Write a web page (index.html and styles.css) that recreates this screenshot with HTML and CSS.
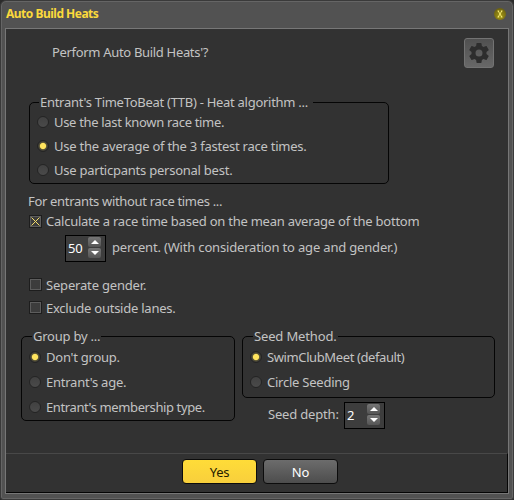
FILE: index.html
```html
<!DOCTYPE html>
<html lang="en">
<head>
<meta charset="utf-8">
<title>Auto Build Heats</title>
<link rel="stylesheet" href="styles.css">
</head>
<body>
<div class="window">
  <header class="titlebar">
    <h1>Auto Build Heats</h1>
    <button class="close" aria-label="Close"><svg width="12" height="12" viewBox="0 0 12 12"><path d="M3.5 3h1.7M6.8 3h1.7M3.5 9h1.7M6.8 9h1.7M4.2 3l3.6 6M7.8 3L4.2 9" fill="none" stroke="#f5ea70" stroke-width="1"/></svg></button>
  </header>
  <main class="panel">
    <div class="content">
      <div class="prompt">
        <span class="tight">Perform Auto Build Heats'?</span>
        <button class="gear" aria-label="Settings"><svg width="20" height="20" viewBox="2 2 20 20"><path fill="#2d2d2d" d="M19.43 12.98c.04-.32.07-.64.07-.98s-.03-.66-.07-.98l2.11-1.65c.19-.15.24-.42.12-.64l-2-3.46c-.12-.22-.39-.3-.61-.22l-2.49 1c-.52-.4-1.08-.73-1.69-.98l-.38-2.65A.49.49 0 0 0 14 2h-4c-.25 0-.46.18-.49.42l-.38 2.65c-.61.25-1.17.59-1.69.98l-2.49-1c-.23-.09-.49 0-.61.22l-2 3.46c-.13.22-.07.49.12.64l2.11 1.65c-.04.32-.07.65-.07.98s.03.66.07.98l-2.11 1.65c-.19.15-.24.42-.12.64l2 3.46c.12.22.39.3.61.22l2.49-1c.52.4 1.08.73 1.69.98l.38 2.65c.03.24.24.42.49.42h4c.25 0 .46-.18.49-.42l.38-2.65c.61-.25 1.17-.59 1.69-.98l2.49 1c.23.09.49 0 .61-.22l2-3.46c.12-.22.07-.49-.12-.64zM12 15.5a3.5 3.5 0 1 1 0-7 3.5 3.5 0 0 1 0 7z"/></svg></button>
      </div>
      <fieldset class="algorithm">
        <legend>Entrant's TimeToBeat (TTB) - Heat algorithm ...</legend>
        <label class="option"><i class="radio"></i><span class="tight">Use the last known race time.</span></label>
        <label class="option"><i class="radio on"></i><span>Use the average of the 3 fastest race times.</span></label>
        <label class="option"><i class="radio"></i><span>Use particpants personal best.</span></label>
      </fieldset>
      <section class="missing">
        <div class="line"><span class="tight">For entrants without race times ...</span></div>
        <label class="line check"><i class="box"><svg width="9" height="9" viewBox="0 0 9 9"><path d="M.5.5l8 8M8.5.5l-8 8" stroke="#f3dc68" stroke-width="1"/></svg></i><span>Calculate a race time based on the mean average of the bottom</span></label>
        <div class="percent">
          <div class="spinner"><b>50</b><div class="arrows"><i><svg width="8" height="4" viewBox="0 0 8 4"><path d="M0 4l4-4 4 4z" fill="#fff"/></svg></i><i><svg width="8" height="4" viewBox="0 0 8 4"><path d="M0 0l4 4 4-4z" fill="#fff"/></svg></i></div></div>
          <span class="loose">percent. (With consideration to age and gender.)</span>
        </div>
      </section>
      <section class="flags">
        <label class="check"><i class="box"></i><span class="loose">Seperate gender.</span></label>
        <label class="check"><i class="box"></i><span>Exclude outside lanes.</span></label>
      </section>
      <div class="columns">
        <fieldset class="group">
          <legend>Group by ...</legend>
          <label class="option"><i class="radio on"></i><span>Don't group.</span></label>
          <label class="option"><i class="radio"></i><span>Entrant's age.</span></label>
          <label class="option"><i class="radio"></i><span class="tighter">Entrant's membership type.</span></label>
        </fieldset>
        <div class="seeding">
          <fieldset class="seed">
            <legend>Seed Method.</legend>
            <label class="option"><i class="radio on"></i><span class="tighter">SwimClubMeet (default)</span></label>
            <label class="option"><i class="radio"></i><span>Circle Seeding</span></label>
          </fieldset>
          <div class="depth">
            <span class="loose">Seed depth:</span>
            <div class="spinner"><b>2</b><div class="arrows"><i><svg width="8" height="4" viewBox="0 0 8 4"><path d="M0 4l4-4 4 4z" fill="#fff"/></svg></i><i><svg width="8" height="4" viewBox="0 0 8 4"><path d="M0 0l4 4 4-4z" fill="#fff"/></svg></i></div></div>
          </div>
        </div>
      </div>
    </div>
    <footer class="actions">
      <button class="btn primary">Yes</button>
      <button class="btn">No</button>
    </footer>
  </main>
</div>
</body>
</html>
```
FILE: styles.css
```css
* { box-sizing: border-box; }
body {
  margin: 0;
  background: #2b2b2b;
  color: #c3c3c3;
  font: 13px/18px "Noto Sans", "Open Sans", sans-serif;
  letter-spacing: -0.24px;
}
button { font: inherit; letter-spacing: inherit; padding: 0; }
i, b { font-style: normal; font-weight: normal; }
svg { display: block; }
span, legend { white-space: nowrap; }
.loose { letter-spacing: -0.18px; }
.tight { letter-spacing: -0.32px; }
.tighter { letter-spacing: -0.39px; }

.window {
  width: 514px;
  height: 500px;
  padding: 0 4px 5px;
  display: flex;
  flex-direction: column;
  background: #525252;
  border: 1px solid #3a3a3a;
  border-radius: 6px 6px 3px 3px;
  box-shadow: inset 0 0 0 1px #656565;
}
.titlebar {
  height: 27px;
  flex: none;
  display: flex;
  align-items: center;
  justify-content: space-between;
  padding: 0 3px 1px 1px;
}
.titlebar h1 {
  margin: 0;
  color: #fbd93c;
  font-size: 12px;
  font-weight: bold;
  letter-spacing: -0.5px;
}
.close {
  width: 12px;
  height: 12px;
  border: 0;
  border-radius: 50%;
  background: radial-gradient(circle at 50% 65%, #a69a18, #6c6210 75%);
}
.panel {
  flex: 1;
  display: flex;
  flex-direction: column;
  background: #323232;
  border: 1px solid #777;
}
.content { height: 424px; padding: 9px 13px 0 15px; }

.prompt { display: flex; justify-content: space-between; padding: 0 1px 0 31px; }
.prompt span { padding-top: 5px; }
.gear {
  width: 30px;
  height: 30px;
  display: grid;
  place-items: center;
  border: 1px solid #737373;
  border-radius: 3px;
  background: linear-gradient(#505050, #686868);
}

fieldset {
  margin: 0;
  min-width: 0;
  border: 1px solid #050505;
  border-radius: 5px;
  padding: 0 7px;
}
legend { height: 18px; padding: 0 1px; }
.option { height: 24px; display: flex; align-items: center; gap: 5px; padding-bottom: 2px; }
.radio {
  width: 12px;
  height: 12px;
  flex: none;
  border: 1px solid #242424;
  border-radius: 50%;
  background: linear-gradient(#414141, #4a4a4a);
}
.radio.on { background: radial-gradient(circle, #ffe45e 0 2.7px, #5a5434 3.6px, #383838 5px); }

.algorithm { width: 360px; height: 91px; margin: 25px 0 0 8px; }
.algorithm legend { margin-left: 2px; padding-right: 5px; letter-spacing: -0.28px; }

.missing { margin: 7px 0 0 7px; }
.line { height: 20px; display: flex; align-items: center; }
.check { display: flex; align-items: center; gap: 4px; padding-left: 1px; }
.box {
  width: 13px;
  height: 13px;
  flex: none;
  display: grid;
  place-items: center;
  border: 1px solid #1d1d1d;
  background: #3c3c3c;
  box-shadow: inset 0 0 0 1px #5d5d5d;
}
.percent { display: flex; align-items: center; gap: 6px; margin: 4px 0 0 37px; }
.percent > span, .depth > span { padding-bottom: 3px; }
.spinner {
  width: 41px;
  height: 27px;
  display: flex;
  align-items: center;
  justify-content: space-between;
  padding: 0 4px 2px 2px;
  border: 1px solid #000;
  background: #3d3d3d;
  color: #fff;
}
.arrows { display: grid; gap: 1px; }
.arrows i {
  width: 13px;
  height: 10px;
  display: grid;
  place-items: center;
  border-radius: 2px;
  background: linear-gradient(#757575, #555);
}

.flags { margin: 11px 0 0 7px; }
.flags .check { height: 23px; }

.columns { display: flex; gap: 7px; margin-top: 8px; }
.columns .option { height: 25px; }
.group { width: 214px; height: 94px; }
.group legend, .seed legend { margin-left: 3px; }
.seed legend { letter-spacing: -0.15px; }
.seeding { width: 253px; flex: none; }
.seed { height: 71px; }
.depth { display: flex; align-items: center; gap: 5px; margin: 4px 0 0 26px; }
.depth .spinner { margin-left: auto; margin-right: 110px; }

.actions {
  flex: 1;
  display: flex;
  gap: 6px;
  padding: 5px 0 0 176px;
  border: 1px solid #050505;
  border-top-color: #484848;
  border-left: 0;
}
.btn {
  width: 75px;
  height: 25px;
  border: 1px solid #0c0c0c;
  border-radius: 4px;
  color: #fff;
  background: linear-gradient(#6c6c6c, #4d4d4d);
}
.btn.primary { color: #242000; background: linear-gradient(#ffdc38, #f8cf3c); }
```
